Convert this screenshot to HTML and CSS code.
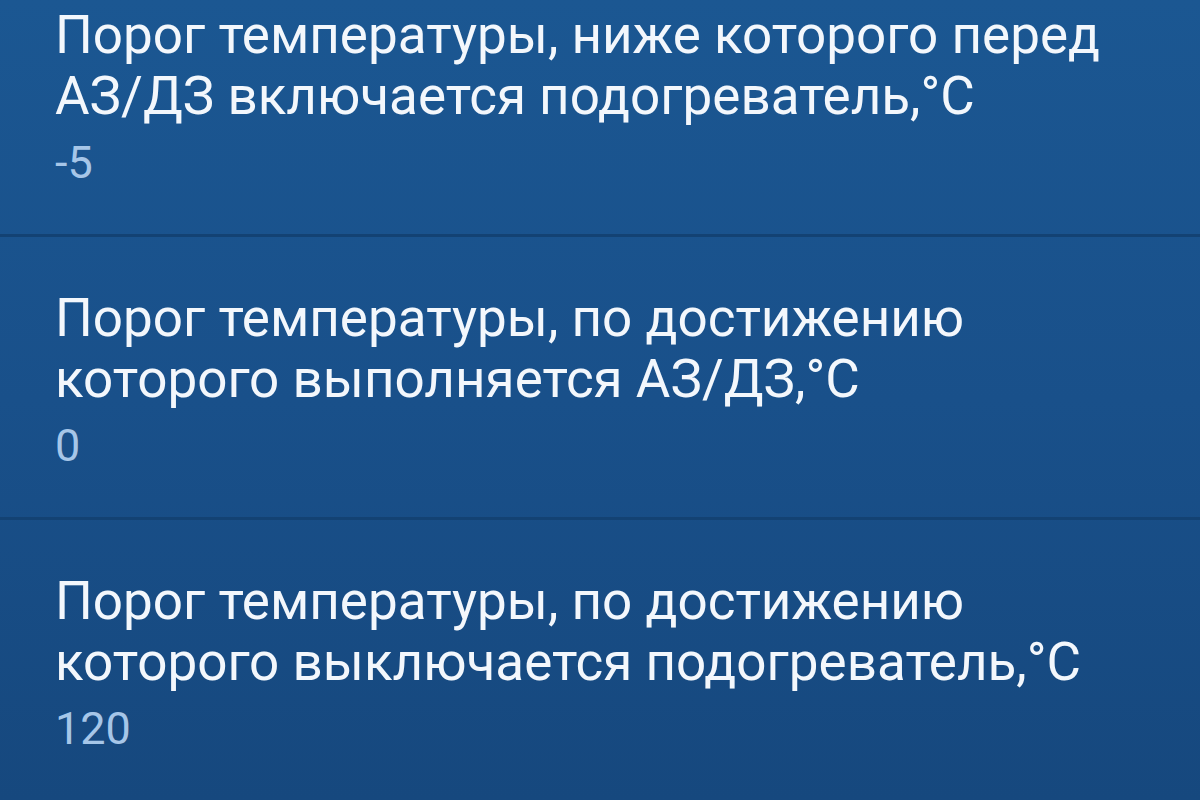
FILE: index.html
```html
<!DOCTYPE html>
<html lang="ru">
<head>
<meta charset="UTF-8">
<meta name="viewport" content="width=device-width, initial-scale=1.0">
<title>Настройки подогревателя</title>
<link rel="stylesheet" href="styles.css">
</head>
<body>
<ul class="prefs">
    <li class="pref">
        <p class="title">Порог температуры, ниже которого перед АЗ/ДЗ включается подогреватель,°C</p>
        <p class="summary">-5</p>
    </li>
    <li class="pref">
        <p class="title">Порог температуры, по достижению которого выполняется АЗ/ДЗ,°C</p>
        <p class="summary">0</p>
    </li>
    <li class="pref">
        <p class="title">Порог температуры, по достижению которого выключается подогреватель,°C</p>
        <p class="summary">120</p>
    </li>
</ul>
</body>
</html>
```

FILE: styles.css
```css
*{margin: 0; padding: 0;}
html,body{
    height: 100%;
}
body{
    background: linear-gradient(180deg, #1b5792 0%, #19508a 50%, #16487e 100%);
    font-family: Roboto, "Noto Sans", sans-serif;
    overflow: hidden;
}
.prefs{
    list-style: none;
    margin-top: -49px;
}
/* строка настройки, разделитель сверху */
.pref{
    border-top: 3px solid #134273;
    padding: 51px 40px 45px 55px;
}
.pref .title{
    color: #f3f7fc;
    font-size: 53px;
    line-height: 61px;
}
.pref .summary{
    color: #a6c6e8;
    font-size: 45px;
    line-height: 52px;
    margin-top: 10px;
}
```
